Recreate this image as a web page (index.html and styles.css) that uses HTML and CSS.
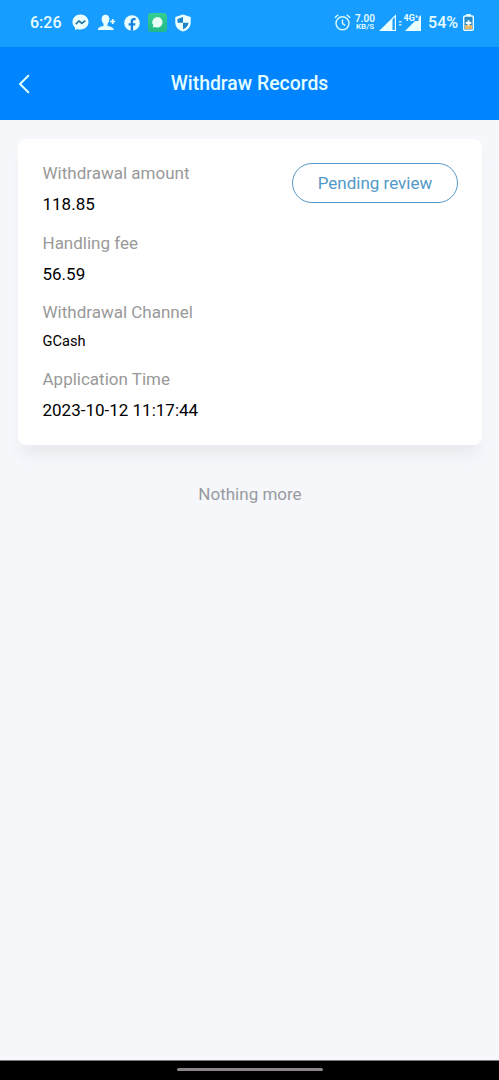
FILE: index.html
```
<!DOCTYPE html>
<html lang="en">
<head>
<meta charset="utf-8">
<title>Withdraw Records</title>
<link rel="stylesheet" href="styles.css">
</head>
<body>
<div class="status">
  <span class="clock">6:26</span>
  <div class="notices">
    <svg width="17" height="17" viewBox="0 0 17 17"><path fill="#eaffff" d="M8.500.5C3.900.5.5 3.800.5 8.100c0 2.300 1 4.300 2.600 5.700V16l2.300-1c1 .4 2 .5 3.100.5 4.600 0 8-3.200 8-7.400S13.100.5 8.500.5z"/><path fill="none" stroke="#26789f" stroke-width="1.700" stroke-linejoin="round" d="M3.800 10.200 6.900 7l3 2.400 3.400-2.800"/></svg>
    <svg width="19" height="17" viewBox="0 0 19 17"><path fill="#eaffff" d="M8.500.7c2.400 0 3.900 1.700 3.900 4.200 0 2-.8 3.600-1.900 4.800v2.300c3.300.5 6 1.300 6.300 4.100H.8c.2-2.800 2.600-3.600 5.700-4.100V9.700C5.300 8.500 4.600 6.900 4.600 4.900 4.600 2.400 6.100.7 8.500.7z"/><path stroke="#eaffff" stroke-width="1.700" d="M13.200 7.500h5M15.700 5v5"/></svg>
    <svg width="16" height="16" viewBox="0 0 16 16"><circle cx="8" cy="8" r="7.800" fill="#eaffff"/><path fill="#1682dd" d="M6.700 15.700v-5.200H4.600V8.200h2.100V6.400c0-2.200 1.300-3.300 3.200-3.300.8 0 1.400.1 1.700.2v2h-1.200c-1 0-1.300.5-1.300 1.200v1.700h2.400l-.4 2.300h-2v5.200z"/></svg>
    <svg width="19" height="19" viewBox="0 0 19 19"><defs><linearGradient id="green" x2="0" y2="1"><stop stop-color="#35cf91"/><stop offset="1" stop-color="#22b889"/></linearGradient></defs><rect width="19" height="19" rx="3.500" fill="url(#green)"/><path fill="#e8fff5" d="M9.500 4a5.200 5.200 0 1 1-2.400 9.900L4.700 14.600l.6-2.300A5.200 5.200 0 0 1 9.500 4z"/></svg>
    <svg width="16" height="18" viewBox="0 0 16 18"><path fill="#eaffff" d="M8 .4 15.700 3v5.400c0 4.300-3 7.700-7.700 9.100C3.300 16.100.3 12.700.3 8.400V3z"/><path fill="#2085c5" d="M8 3v5.800H2.500V4.900zM8 8.800h5.500c-.2 2.900-2.400 5.300-5.500 6.500z"/></svg>
  </div>
  <div class="signals">
    <svg width="17" height="18" viewBox="0 0 17 18"><g fill="none" stroke="#d9fbff" stroke-width="1.400"><circle cx="8.500" cy="9.300" r="6.500"/><path d="M8.500 5.500v4.200l2.800 1.600M.8 3.800 4.300.7M16.200 3.800 12.700.7"/></g></svg>
    <div class="speed"><span class="rate">7.00</span><span class="unit">KB/S</span></div>
    <svg class="sig" width="43" height="20" viewBox="0 0 43 20"><path fill="#eaffff" d="M1 18 13.500 5.500V18z"/><path fill="none" stroke="#eaffff" stroke-width="1.200" d="M1.500 17.500 16.400 2.600v14.900z"/><path fill="#bcecff" d="M20 8h2.500v1.500H20zM20 11h2.500v1.500H20z"/><path fill="#eaffff" d="M26 18 42 2v16z"/><path fill="#179cff" d="M24 0h15.500v8H24z"/><text class="net" x="24.500" y="7.500">4G⁺</text></svg>
    <span class="percent">54%</span>
    <svg class="battery" width="11" height="17" viewBox="0 0 11 17"><path fill="#eaffff" d="M3.300 0h4.400v2H3.300z"/><rect x=".7" y="2" width="9.600" height="14.300" rx="1.300" fill="#2b8cc8" stroke="#eaffff" stroke-width="1.400"/><path fill="#e9b768" d="M2 11h7v4H2z"/><path stroke="#fff" stroke-width="1.800" d="M2.700 9h5.600M5.500 6.200v5.600"/></svg>
  </div>
</div>
<header class="header">
  <svg class="back" width="12" height="20" viewBox="0 0 12 20"><path fill="none" stroke="#e2ffff" stroke-width="2" stroke-linecap="round" stroke-linejoin="round" d="M10.300 1.800 2 10l8.300 8.200"/></svg>
  <h1 class="title">Withdraw Records</h1>
</header>
<main class="main">
  <section class="card">
    <dl class="details">
      <div class="item"><dt>Withdrawal amount</dt><dd>118.85</dd></div>
      <div class="item"><dt>Handling fee</dt><dd>56.59</dd></div>
      <div class="item"><dt>Withdrawal Channel</dt><dd class="channel">GCash</dd></div>
      <div class="item"><dt>Application Time</dt><dd>2023-10-12 11:17:44</dd></div>
    </dl>
    <span class="state">Pending review</span>
  </section>
  <p class="end">Nothing more</p>
</main>
<div class="navbar"><div class="handle"></div></div>
</body>
</html>
```

FILE: styles.css
```
* { box-sizing: border-box; }
body {
  margin: 0;
  height: 1080px;
  display: flex;
  flex-direction: column;
  overflow: hidden;
  background: #f5f7fb;
  font-family: Roboto, "Liberation Sans", sans-serif;
}
svg { display: block; flex: none; }
.status {
  height: 47px;
  padding: 0 25px 2px 30px;
  display: flex;
  align-items: center;
  background: #179cff;
  color: #e6fdff;
}
.clock, .percent { font-size: 16px; font-weight: 500; line-height: 20px; }
.clock { width: 42px; }
.notices { display: flex; align-items: center; gap: 8px; }
.signals { margin-left: auto; display: flex; align-items: center; }
.speed {
  width: 20px;
  margin: 0 4px 0 4px;
  display: flex;
  flex-direction: column;
  align-items: center;
  font-weight: 600;
}
.rate { font-size: 10px; line-height: 9px; }
.unit { font-size: 8px; line-height: 8px; }
.net { font-size: 9px; font-weight: 700; fill: #eaffff; }
.percent { margin: 0 5px 0 6px; }
.header {
  height: 73px;
  padding: 0 18px;
  display: grid;
  grid-template-columns: 12px 1fr 12px;
  align-items: center;
  background: #0084ff;
}
.title {
  margin: 0;
  text-align: center;
  font-size: 19.400px;
  font-weight: 500;
  color: #e4fdff;
}
.main { flex: 1; padding: 19px 17px 0 18px; }
.card {
  height: 306px;
  padding: 22px 24px 0 24.500px;
  display: flex;
  justify-content: space-between;
  align-items: flex-start;
  background: #fff;
  border-radius: 8px;
  box-shadow: 0 14px 14px -4px #e9eaee;
}
.details { margin: 0; display: flex; flex-direction: column; gap: 15.500px; }
dt { font-size: 17px; line-height: 24px; color: #999; }
dd { margin: 7px 0 0; font-size: 17px; line-height: 24px; color: #000; }
.item + .item { margin-top: -1px; }
.channel { font-size: 14.600px; line-height: 21px; }
.state {
  width: 166px;
  height: 40px;
  margin-top: 2px;
  border: 1px solid #5699c6;
  border-radius: 20px;
  font-size: 17px;
  line-height: 39px;
  text-align: center;
  color: #5199c8;
}
.end {
  margin: 37px 0 0;
  text-align: center;
  font-size: 17px;
  line-height: 24px;
  color: #999b9f;
}
.navbar {
  height: 20px;
  padding-top: 7px;
  border-top: 1px solid #777;
  display: flex;
  justify-content: center;
  background: #000;
}
.handle { width: 146px; height: 3px; border-radius: 2px; background: #8c858b; }
```
